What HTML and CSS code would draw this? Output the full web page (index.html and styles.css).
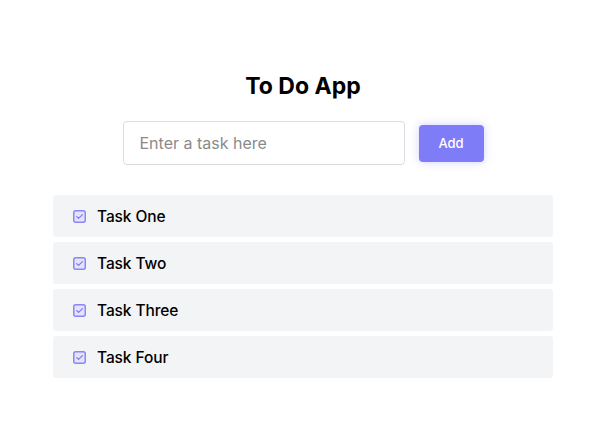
FILE: index.html
```html
<!DOCTYPE html>
<html>
<head>
<meta charset="utf-8">
<link rel="stylesheet" href="styles.css">
</head>
<body>
<main class="app">
  <h1 class="title">To Do App</h1>
  <form class="add-form">
    <input class="task-input" type="text" placeholder="Enter a task here">
    <button class="add-btn" type="button">Add</button>
  </form>
  <ul class="tasks">
    <li class="task"><span class="check"><svg viewBox="0 0 13 13" width="13" height="13"><rect x="0.75" y="0.75" width="11.5" height="11.5" rx="2" fill="#e4e3fb" stroke="#8a86f6" stroke-width="1.5"/><path d="M3.7 6.6 L5.6 8.4 L9.4 4.6" fill="none" stroke="#7f7cf8" stroke-width="1.3" stroke-linecap="round" stroke-linejoin="round"/></svg></span><span class="label">Task One</span></li>
    <li class="task"><span class="check"><svg viewBox="0 0 13 13" width="13" height="13"><rect x="0.75" y="0.75" width="11.5" height="11.5" rx="2" fill="#e4e3fb" stroke="#8a86f6" stroke-width="1.5"/><path d="M3.7 6.6 L5.6 8.4 L9.4 4.6" fill="none" stroke="#7f7cf8" stroke-width="1.3" stroke-linecap="round" stroke-linejoin="round"/></svg></span><span class="label">Task Two</span></li>
    <li class="task"><span class="check"><svg viewBox="0 0 13 13" width="13" height="13"><rect x="0.75" y="0.75" width="11.5" height="11.5" rx="2" fill="#e4e3fb" stroke="#8a86f6" stroke-width="1.5"/><path d="M3.7 6.6 L5.6 8.4 L9.4 4.6" fill="none" stroke="#7f7cf8" stroke-width="1.3" stroke-linecap="round" stroke-linejoin="round"/></svg></span><span class="label">Task Three</span></li>
    <li class="task"><span class="check"><svg viewBox="0 0 13 13" width="13" height="13"><rect x="0.75" y="0.75" width="11.5" height="11.5" rx="2" fill="#e4e3fb" stroke="#8a86f6" stroke-width="1.5"/><path d="M3.7 6.6 L5.6 8.4 L9.4 4.6" fill="none" stroke="#7f7cf8" stroke-width="1.3" stroke-linecap="round" stroke-linejoin="round"/></svg></span><span class="label">Task Four</span></li>
  </ul>
</main>
</body>
</html>
```

FILE: styles.css
```css
* { box-sizing: border-box; }
html, body { margin: 0; padding: 0; background: #fff; }
body { font-family: Inter, "Noto Sans", sans-serif; color: #000; }
.app {
  width: 606px;
  display: flex;
  flex-direction: column;
  align-items: center;
  padding-top: 71px;
}
.title {
  margin: 0;
  font-size: 23px;
  font-weight: 700;
  line-height: 30px;
}
.add-form {
  margin-top: 20px;
  display: flex;
  align-items: center;
  gap: 14px;
}
.task-input {
  width: 282px;
  height: 44px;
  border: 1px solid #dcdce0;
  border-radius: 4px;
  padding: 0 16px;
  font-family: inherit;
  font-size: 16px;
  color: #333;
  outline: none;
}
.task-input::placeholder { color: #8a8a8a; }
.add-btn {
  width: 65px;
  height: 37px;
  border: none;
  border-radius: 4px;
  background: #7f7cf8;
  color: #fff;
  font-family: inherit;
  font-size: 13px;
  font-weight: 500;
  box-shadow: 0 0 8px rgba(127, 124, 248, 0.35);
}
.tasks {
  list-style: none;
  margin: 30px 0 0;
  padding: 0;
  width: 500px;
  display: flex;
  flex-direction: column;
  gap: 5px;
}
.task {
  height: 42px;
  background: #f3f4f6;
  border-radius: 3px;
  display: flex;
  align-items: center;
  padding-left: 20px;
  gap: 11px;
}
.check { display: flex; width: 13px; height: 13px; }
.label { font-size: 15.5px; font-weight: 500; letter-spacing: -0.1px; }
```
